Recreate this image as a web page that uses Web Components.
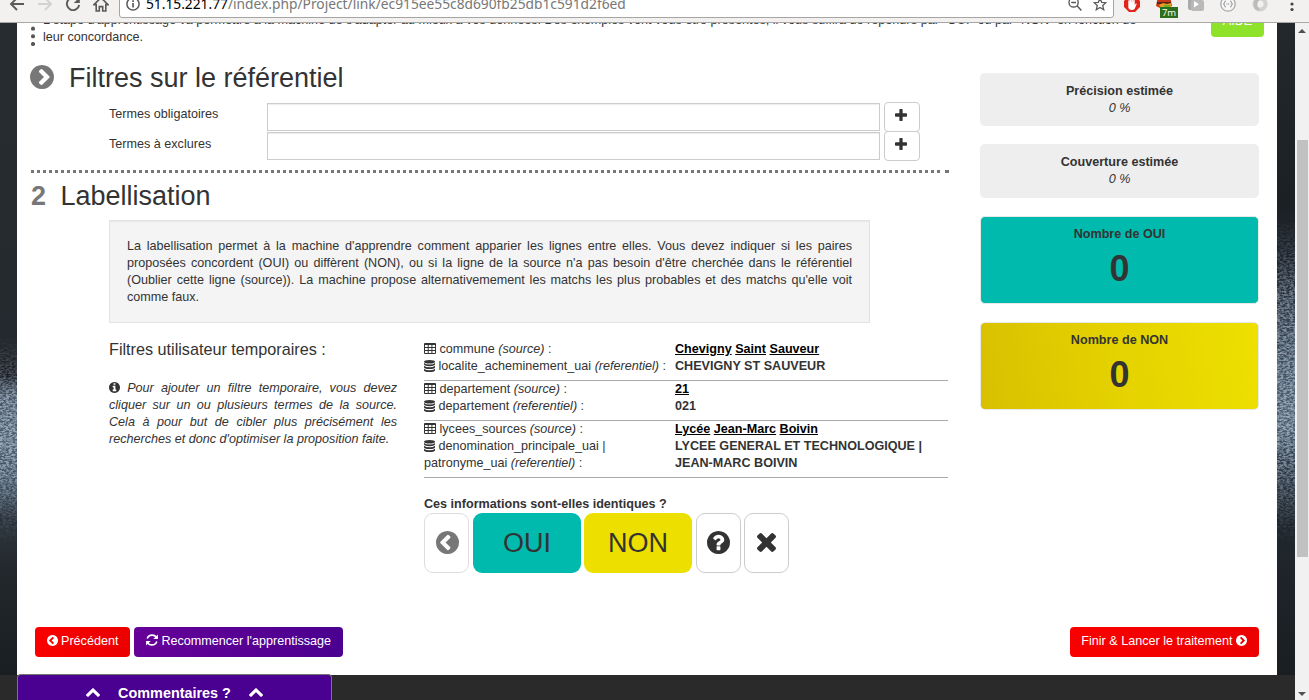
<!DOCTYPE html>
<html lang="fr">
<head>
<meta charset="utf-8">
<title>Apprentissage</title>
<style>
html,body{margin:0;height:100%;overflow:hidden}
body{font:12.6px/17px "Liberation Sans",Arial,sans-serif;color:#333;background:#2a2a2a}
</style>
</head>
<body>
<learning-app></learning-app>
<script>
const DISC='M1664 896q0 209-103 385.5t-279.5 279.5-385.5 103-385.5-103-279.5-279.5-103-385.5 103-385.5 279.5-279.5 385.5-103 385.5 103 279.5 279.5 103 385.5z';
const CHEV='M909 1395l454-454q19-19 19-45t-19-45l-454-454q-19-19-45-19t-45 19l-102 102q-19 19-19 45t19 45l307 307-307 307q-19 19-19 45t19 45l102 102q19 19 45 19t45-19z';
const p=(d,x='')=>`<path fill-rule="evenodd" d="${d}" ${x}/>`;
const ICONS={
 right:['128 128 1536 1536',p(CHEV+DISC)],
 left:['128 128 1536 1536',p(CHEV+DISC,'transform="matrix(-1 0 0 1 1792 0)"')],
 question:['128 128 1536 1536',p('M1024 1376v-192q0-14-9-23t-23-9h-192q-14 0-23 9t-9 23v192q0 14 9 23t23 9h192q14 0 23-9t9-23zM1280 704q0-88-55.5-163t-138.5-116-170-41q-243 0-371 213-15 24 8 42l132 100q7 6 19 6 16 0 25-12 53-68 86-92 34-24 86-24 48 0 85.5 26t37.5 59q0 38-20 61t-68 45q-63 28-115.5 86.5t-52.5 125.5v36q0 14 9 23t23 9h192q14 0 23-9t9-23q0-19 21.5-49.5t54.5-49.5q32-18 49-28.5t46-35 44.5-48 28-60.5 12.5-81z'+DISC)],
 info:['128 128 1536 1536',p('M1152 1376v-160q0-14-9-23t-23-9h-96v-512q0-14-9-23t-23-9h-320q-14 0-23 9t-9 23v160q0 14 9 23t23 9h96v320h-96q-14 0-23 9t-9 23v160q0 14 9 23t23 9h448q14 0 23-9t9-23zM1024 480v-160q0-14-9-23t-23-9h-192q-14 0-23 9t-9 23v160q0 14 9 23t23 9h192q14 0 23-9t9-23z'+DISC)],
 times:['302 302 1188 1188',p('M1490 1322q0 40-28 68l-136 136q-28 28-68 28t-68-28l-294-294-294 294q-28 28-68 28t-68-28l-136-136q-28-28-28-68t28-68l294-294-294-294q-28-28-28-68t28-68l136-136q28-28 68-28t68 28l294 294 294-294q28-28 68-28t68 28l136 136q28 28 28 68t-28 68l-294 294 294 294q28 28 28 68z','transform="translate(0 -64)"')],
 plus:['192 128 1408 1408',p('M1600 736v192q0 40-28 68t-68 28h-416v416q0 40-28 68t-68 28h-192q-40 0-68-28t-28-68v-416h-416q-40 0-68-28t-28-68v-192q0-40 28-68t68-28h416v-416q0-40 28-68t68-28h192q40 0 68 28t28 68v416h416q40 0 68 28t28 68z')],
 up:['90 384 1612 1228',p('M1683 1331l-166 165q-19 19-45 19t-45-19l-531-531-531 531q-19 19-45 19t-45-19l-166-165q-19-19-19-45.5t19-45.5l742-741q19-19 45-19t45 19l742 741q19 19 19 45.5t-19 45.5z')],
 refresh:['0 0 12 12','<path d="M10.9 4.6A5.1 5.1 0 0 0 1.2 4.6M1.1 7.4a5.1 5.1 0 0 0 9.7 0" fill="none" stroke="currentColor" stroke-width="1.6"/><path d="M11.9.4v4.6H7.3zM.1 11.6V7h4.6z"/>'],
 table:['0 0 12 11','<path fill-rule="evenodd" d="M1 0h10a1 1 0 0 1 1 1v9a1 1 0 0 1-1 1H1a1 1 0 0 1-1-1V1a1 1 0 0 1 1-1zM1 2v2h2.7V2zm3.7 0v2h2.7V2zm3.7 0v2H11V2zM1 5v2h2.7V5zm3.7 0v2h2.7V5zm3.7 0v2H11V5zM1 8v2h2.7V8zm3.7 0v2h2.7V8zm3.7 0v2H11V8z"/>'],
 database:['0 0 11 12','<ellipse cx="5.5" cy="1.8" rx="5.5" ry="1.8"/><path d="M0 2.9q1.6 1.5 5.5 1.5T11 2.9V4.6Q10 6.2 5.5 6.2T0 4.6zM0 5.8q1.6 1.5 5.5 1.5T11 5.8V7.5Q10 9.1 5.5 9.1T0 7.5zM0 8.7q1.6 1.5 5.5 1.5T11 8.7v1.7Q10 12 5.5 12T0 10.4z"/>'],
 back:['0 0 16 16','<path d="M15 8H2M8 2 2 8l6 6" fill="none" stroke="currentColor" stroke-width="1.9"/>'],
 forward:['0 0 16 16','<path d="M1 8h13M8 2l6 6-6 6" fill="none" stroke="currentColor" stroke-width="1.9"/>'],
 reload:['0 0 16 16','<path d="M13.2 4.4A6.2 6.2 0 1 0 14.2 9" fill="none" stroke="currentColor" stroke-width="1.9"/><path d="M14.8 1v6H8.8z"/>'],
 home:['0 0 16 16','<path d="M1 8.6 8 1.7l7 6.9h-2.2V15H9.7v-4.4H6.3V15H3.2V8.6z" fill="none" stroke="currentColor" stroke-width="1.6"/>'],
 site:['0 0 14 14','<circle cx="7" cy="7" r="6.1" fill="none" stroke="currentColor" stroke-width="1.5"/><path d="M6.2 6h1.7v4.6H6.2zM6.2 3.2h1.7v1.7H6.2z"/>'],
 zoomout:['0 0 14 14','<circle cx="5.6" cy="5.4" r="4.6" fill="none" stroke="currentColor" stroke-width="1.4"/><path d="M3.2 5.4H8M9 8.8l4.4 4.6" stroke="currentColor" stroke-width="1.5"/>'],
 star:['0 0 14 14','<path d="m7 1.4 1.7 3.9 4.2.4-3.2 2.8 1 4.2L7 10.5l-3.7 2.2 1-4.2-3.2-2.8 4.2-.4z" fill="none" stroke="currentColor" stroke-width="1.3"/>'],
 hand:['0 0 16 16','<path d="M5 0h6l5 5v6l-5 5H5l-5-5V5z" fill="#e1251b"/><path d="M4.3 8V4.6q.8-.8 1.2 0V7l.3-4.4q.8-.8 1.3 0L7.3 7l.3-5q.8-.8 1.3 0v5l.6-4q.8-.6 1.2.2V9l1-1.4q1-.4 1 .5l-2 4.6q-1 1.3-3 1.3-3.2 0-3.4-3z" fill="#fff"/>'],
 mail:['0 0 16 16','<path d="M2 0h12l2 10-8 4-8-4z" fill="#c8371a"/><path d="M1 6h14v2H1z" fill="#5a2413"/><path d="M3 9l4-2 4 1 4-1v5H5z" fill="#e89a22"/><path d="M8 9h6v2H8z" fill="#6fae2a"/>'],
 play:['0 0 16 16','<rect y="1" width="14" height="13" rx="2" fill="#aaa"/><rect x="3" y="4" width="13" height="11" rx="2" fill="#b9b9b9"/><path d="m6 5 5 3.3L6 11.6z" fill="#fff"/>'],
 braces:['0 0 16 16','<circle cx="8" cy="8" r="7.2" fill="#f6f6f6" stroke="#aaa" stroke-width="1.3"/><path d="M5.8 5q-1.2 0-1.2 1.4T3.4 8q1.2.2 1.2 1.6T5.8 11M10.2 5q1.2 0 1.2 1.4T12.6 8q-1.2.2-1.2 1.6T10.2 11" fill="none" stroke="#888"/><path d="M6.4 8h3.4" stroke="#888" stroke-dasharray="1 .6"/>'],
 swirl:['0 0 16 16','<circle cx="8" cy="8" r="5.6" fill="none" stroke="#d2d2d2" stroke-width="4"/><path d="M3 13Q-1 5 6 2q5-2 7 1-5-1-7 3-2 4 2 8-3 1-5-1z" fill="#bbb"/><circle cx="8.5" cy="8" r="2.5" fill="#f2f1f0"/>'],
 more:['0 0 4 16','<circle cx="2" cy="2.5" r="1.6"/><circle cx="2" cy="8" r="1.6"/><circle cx="2" cy="13.5" r="1.6"/>']
};
const define=(name,css,html)=>customElements.define(name,class extends HTMLElement{
  connectedCallback(){
    if(this.shadowRoot)return;
    this.attachShadow({mode:'open'}).innerHTML=`<style>*{box-sizing:border-box}:host{display:block;box-sizing:border-box}${css}</style>`+(typeof html==='function'?html(this):html);
  }
});

define('ui-icon',`:host{display:inline-block;flex:none;line-height:0}svg{display:block;width:100%;height:100%;fill:currentColor}`,
 e=>{const[v,b]=ICONS[e.getAttribute('name')];return `<svg viewBox="${v}">${b}</svg>`});

define('browser-bar',`
:host{height:23px;background:#f2f1f0;border-bottom:1px solid #a9a8a6;overflow:hidden;color:#5a5a5a;display:flex;align-items:flex-start}
.nav{display:flex;width:119px;padding-left:9px;gap:12px;margin-top:-4px}
.nav ui-icon{width:16px;height:16px}
.off{color:#d3d2d0}
.url{display:flex;width:995px;height:28px;margin-top:-10px;background:#fff;border:1px solid #a6a5a3;border-radius:3px;align-items:flex-start;padding:5px 6px 0 6px}
.url ui-icon{width:14px;height:14px;margin-top:1px}
.addr{flex:1;margin-left:6px;margin-top:-1px;font:13.78px/18px "Noto Sans","Open Sans",sans-serif;color:#777;white-space:pre}
.addr b{font-weight:400;color:#000}
.tools{display:flex;gap:11px}
.ext{display:flex;gap:16px;margin:-4px 0 0 10px}
.ext ui-icon{width:16px;height:16px}
.mail{position:relative;width:16px;height:16px}
.mail i{position:absolute;left:4px;top:11px;width:18px;height:11px;background:#2c6f1a;color:#fff;font:normal 9.5px/11px "Open Sans",sans-serif;text-align:center}`,
`<div class="nav"><ui-icon name="back"></ui-icon><ui-icon class="off" name="forward"></ui-icon><ui-icon name="reload"></ui-icon><ui-icon name="home"></ui-icon></div>
<div class="url"><ui-icon name="site"></ui-icon><span class="addr"><b>51.15.221.77</b>/index.php/Project/link/ec915ee55c8d690fb25db1c591d2f6ed</span><span class="tools"><ui-icon name="zoomout"></ui-icon><ui-icon name="star"></ui-icon></span></div>
<div class="ext"><ui-icon name="hand"></ui-icon><span class="mail"><ui-icon name="mail"></ui-icon><i>7m</i></span><ui-icon name="play"></ui-icon><ui-icon name="braces"></ui-icon><ui-icon name="swirl"></ui-icon><ui-icon name="more" style="width:4px;margin-left:6px;color:#444"></ui-icon></div>`);

define('scroll-bar',`:host{width:14px;background:#f1f1f1;display:flex;flex-direction:column;align-items:center;padding:6px 0 4px}
.up,.down{border:4px solid transparent;width:0;height:0}
.up{border-top:0;border-bottom-color:#505050}.down{border-bottom:0;border-top-color:#505050}
.thumb{width:11px;height:417px;margin:107px 0 auto;background:#c1c1c1}`,
`<div class="up"></div><div class="thumb"></div><div class="down"></div>`);

define('water-edge',`:host{width:17px;overflow:hidden}svg{display:block;width:100%;height:100%}`,
e=>{const r=e.hasAttribute('right');
const s=r?[[0,'#22282b'],[.28,'#1b2024'],[.36,'#222a33'],[.44,'#46525f'],[.55,'#667a8c'],[.62,'#6f8496'],[.69,'#3d4a57'],[.77,'#20272e'],[1,'#191e21']]
:[[0,'#262c30'],[.44,'#242a2e'],[.54,'#23282e'],[.57,'#667686'],[.64,'#74889a'],[.7,'#5c6f80'],[.76,'#2e3740'],[.84,'#22282c'],[1,'#191e21']];
return `<svg preserveAspectRatio="none" viewBox="0 0 18 652"><defs><linearGradient id="g" x2="0" y2="1">${s.map(a=>`<stop offset="${a[0]}" stop-color="${a[1]}"/>`).join('')}</linearGradient><linearGradient id="m" x2="0" y2="1"><stop offset="${r?.3:.48}" stop-color="#000"/><stop offset="${r?.42:.57}" stop-color="#fff"/><stop offset=".68" stop-color="#fff"/><stop offset=".8" stop-color="#000"/></linearGradient><mask id="k"><rect width="18" height="652" fill="url(#m)"/></mask><filter id="n" color-interpolation-filters="sRGB"><feTurbulence type="fractalNoise" baseFrequency=".3 .6" numOctaves="3" seed="4"/><feColorMatrix values="3 0 0 0 -1.05 3 0 0 0 -1 3 0 0 0 -.93 0 0 0 0 .3"/></filter></defs><rect width="18" height="652" fill="url(#g)"/><g mask="url(#k)"><rect width="18" height="652" filter="url(#n)"/></g></svg>`});

define('section-title',`:host{display:flex;align-items:center;gap:15px;height:30px;font-size:27px;line-height:30px}`,
`<slot name="mark"></slot><slot></slot><style>::slotted([slot=mark]){color:#777}</style>`);

define('term-row',`:host{display:grid;grid-template-columns:158px 613px 40px;height:29px;margin-left:78px}
.f{height:28px;margin-top:1px;border:1px solid #ccc;box-shadow:inset 0 1px 1px rgba(0,0,0,.075)}
.b{margin-left:4px;width:36px;height:30px;border:1px solid #ccc;border-radius:4px;display:flex;align-items:center;justify-content:center;padding:0 2px 4px 0}
.b ui-icon{width:12px;height:12px}.l{padding-top:4px}`,
`<div class="l"><slot></slot></div><div class="f"></div><div class="b"><ui-icon name="plus"></ui-icon></div>`);

define('info-well',`:host{margin:9px 79px 0 78px;height:103px;background:#f4f4f4;border:1px solid #e3e3e3;box-shadow:inset 0 1px 1px rgba(0,0,0,.05);padding:17px 17px 0;text-align:justify}`,`<slot></slot>`);

define('user-filters',`:host{width:288px;margin-left:78px}
.t{font-size:16.2px;line-height:20px;margin:-1px 0 21px}.p{font-style:italic;text-align:justify}
ui-icon{width:11px;height:11px;vertical-align:-1px}`,
`<div class="t">Filtres utilisateur temporaires :</div><div class="p"><ui-icon name="info"></ui-icon> <slot></slot></div>`);

define('pair-row',`:host{display:grid;grid-template-columns:251px 1fr;border-bottom:1px solid #aaa;padding-bottom:5px}
ui-icon{height:11px;width:12px;vertical-align:-1px}ui-icon[name=database]{width:11px;height:12px;vertical-align:-1.5px}
.a{color:#000;font-weight:700}u+u{margin-left:3.5px}.v{font-weight:700}.n{white-space:nowrap}`,
e=>{const g=k=>e.getAttribute(k);return `<div class="n"><ui-icon name="table"></ui-icon> ${g('source')} <i>(source)</i> :</div><div class="a">${g('terms').split(' ').map(t=>`<u>${t}</u>`).join('')}</div><div class="n"><ui-icon name="database"></ui-icon> ${g('ref').replace('| ','|<br>')} <i>(referentiel)</i> :</div><div class="v">${g('value').replace('| ','|<br>')}</div>`});

define('answer-bar',`.q{font-weight:700;line-height:18px}.r{display:flex;height:60px}
.b{border:1px solid #ccc;border-radius:9px;display:flex;align-items:center;justify-content:center;font-size:27px;width:45px;padding-bottom:1px}
.w{width:108px;border:0;padding-bottom:0}.y{background:#00baae;margin:0 3px 0 4px}.n{background:#eddf00;margin-right:4px}
ui-icon{width:23px;height:23px}.x ui-icon{width:19px;height:19px}.d{color:#777;border-color:#ddd;padding-left:1px}.x{margin-left:3px}`,
`<div class="q"><slot></slot></div><div class="r"><div class="b d"><ui-icon name="left"></ui-icon></div><div class="b w y">OUI</div><div class="b w n">NON</div><div class="b"><ui-icon name="question"></ui-icon></div><div class="b x"><ui-icon name="times"></ui-icon></div></div>`);

define('stat-card',`:host{background:#eee;border-radius:5px;text-align:center;height:53px;padding-top:10px;font-weight:700}
.v{font-style:italic;font-weight:400}
:host([kind]){height:88px;border:1px solid #e8e8e8;background:#00baae;padding-top:9px}
:host([kind=no]){background:linear-gradient(80deg,#d8c000,#e5d200 50%,#eee000)}
:host([kind]) .v{font:700 36px/40px "Liberation Sans",Arial,sans-serif;margin-top:6px}`,
`<div><slot></slot></div><div class="v"><slot name="value"></slot></div>`);

define('solid-button',`:host{display:flex;align-items:flex-start;gap:3.5px;height:30px;border-radius:4px;padding:6px 12px 0 11.5px;color:#fff;white-space:nowrap;background:linear-gradient(80deg,#fa0000,#eb0000)}
:host([violet]){background:linear-gradient(80deg,#660099,#4a008f)}`,`<slot></slot><style>::slotted(ui-icon){width:11px;height:11px;margin-top:2px}::slotted([name=refresh]){width:12px!important;height:12px!important;margin-top:1px}</style>`);

define('comments-tab',`:host{width:315px;height:27px;background:#4a0090;border:1px solid #777;border-bottom:0;border-radius:4px 4px 0 0;color:#fff;font:700 14.4px/18px "Liberation Sans",Arial,sans-serif;display:flex;justify-content:center;gap:18px;padding:9px 0 0}
ui-icon{width:14px;height:11px;margin-top:3px}`,`<ui-icon name="up"></ui-icon><slot></slot><ui-icon name="up"></ui-icon>`);

define('learning-app',`
:host{display:flex;flex-direction:column;width:1309px;height:700px;overflow:hidden}
.view{display:flex;height:677px}
.doc{width:1295px;display:flex;flex-direction:column}
.mid{display:flex;height:652px;overflow:hidden}
.foot{height:25px;padding-left:17px;background:#2a2a2a}
comments-tab{margin-top:-1px;position:relative}
.page{width:1260px;background:#fff;display:flex;flex-direction:column}
.cols{display:flex;height:604px}
main{width:918px;margin:-11px 0 0 14px}
.intro{display:flex;width:1130px;height:34px;white-space:nowrap}
.dots{width:4px;margin-right:8px;background:radial-gradient(circle at 2px 2px,#555 1.7px,transparent 2.3px) 0 7px/4px 7.7px}
.rule{height:3px;margin-top:10px;background:linear-gradient(#777,#777) 100% 0/4px 3px no-repeat,repeating-linear-gradient(90deg,#777 0 3px,transparent 3px 6px) 0 0/912px 3px no-repeat}
.work{display:flex;gap:27px;margin-top:17px}
.pairs{width:524px}
answer-bar{margin-top:17px}
aside{width:284px;margin-left:31px;display:flex;flex-direction:column}
.aide{align-self:flex-end;width:53px;height:30px;margin-top:-16px;background:#8fe22a;border-radius:4px;color:#fff;text-align:center;line-height:28px}
stat-card{width:279px}
.bar{display:flex;padding:0 18px;gap:4px}
`,`<browser-bar></browser-bar>
<div class="view"><div class="doc"><div class="mid"><water-edge></water-edge><div class="page">
<div class="cols"><main>
<div class="intro"><div class="dots"></div><div>L'étape d'apprentissage va permettre à la machine de s'adapter au mieux à vos données. Des exemples vont vous être présentés, il vous suffira de répondre par "OUI" ou par "NON" en fonction de<br>leur concordance.</div></div>
<section-title style="margin-top:17px"><ui-icon slot="mark" name="right" style="width:24px;height:24px;margin:-2px 0 0 -1px"></ui-icon>Filtres sur le référentiel</section-title>
<term-row style="margin-top:9px">Termes obligatoires</term-row><term-row><div style="margin-top:1px">Termes à exclures</div></term-row>
<div class="rule"></div>
<section-title style="margin-top:8px"><b slot="mark" style="margin-right:-.5px">2</b>Labellisation</section-title>
<info-well>La labellisation permet à la machine d'apprendre comment apparier les lignes entre elles. Vous devez indiquer si les paires proposées concordent (OUI) ou diffèrent (NON), ou si la ligne de la source n'a pas besoin d'être cherchée dans le référentiel (Oublier cette ligne (source)). La machine propose alternativemement les matchs les plus probables et des matchs qu'elle voit comme faux.</info-well>
<div class="work"><user-filters>Pour ajouter un filtre temporaire, vous devez cliquer sur un ou plusieurs termes de la source. Cela à pour but de cibler plus précisément les recherches et donc d'optimiser la proposition faite.</user-filters>
<div class="pairs"><pair-row source="commune" terms="Chevigny Saint Sauveur" ref="localite_acheminement_uai" value="CHEVIGNY ST SAUVEUR" style="padding-top:1px"></pair-row>
<pair-row source="departement" terms="21" ref="departement" value="021"></pair-row>
<pair-row source="lycees_sources" terms="Lycée Jean-Marc Boivin" ref="denomination_principale_uai | patronyme_uai" value="LYCEE GENERAL ET TECHNOLOGIQUE | JEAN-MARC BOIVIN"></pair-row>
<answer-bar>Ces informations sont-elles identiques ?</answer-bar></div></div>
</main><aside><div class="aide">AIDE</div>
<stat-card style="margin-top:36px">Précision estimée<span slot="value">0 %</span></stat-card>
<stat-card style="margin-top:18px;height:54px">Couverture estimée<span slot="value">0 %</span></stat-card>
<stat-card kind="yes" style="margin-top:18px">Nombre de OUI<span slot="value">0</span></stat-card>
<stat-card kind="no" style="margin-top:18px">Nombre de NON<span slot="value">0</span></stat-card>
</aside></div>
<div class="bar"><solid-button><ui-icon name="left"></ui-icon>Précédent</solid-button><solid-button violet><ui-icon name="refresh"></ui-icon>Recommencer l'apprentissage</solid-button><solid-button style="margin-left:auto">Finir &amp; Lancer le traitement<ui-icon name="right"></ui-icon></solid-button></div>
</div><water-edge right style="width:18px"></water-edge></div>
<div class="foot"><comments-tab>Commentaires ?</comments-tab></div></div>
<scroll-bar></scroll-bar></div>`);
</script>
</body>
</html>
